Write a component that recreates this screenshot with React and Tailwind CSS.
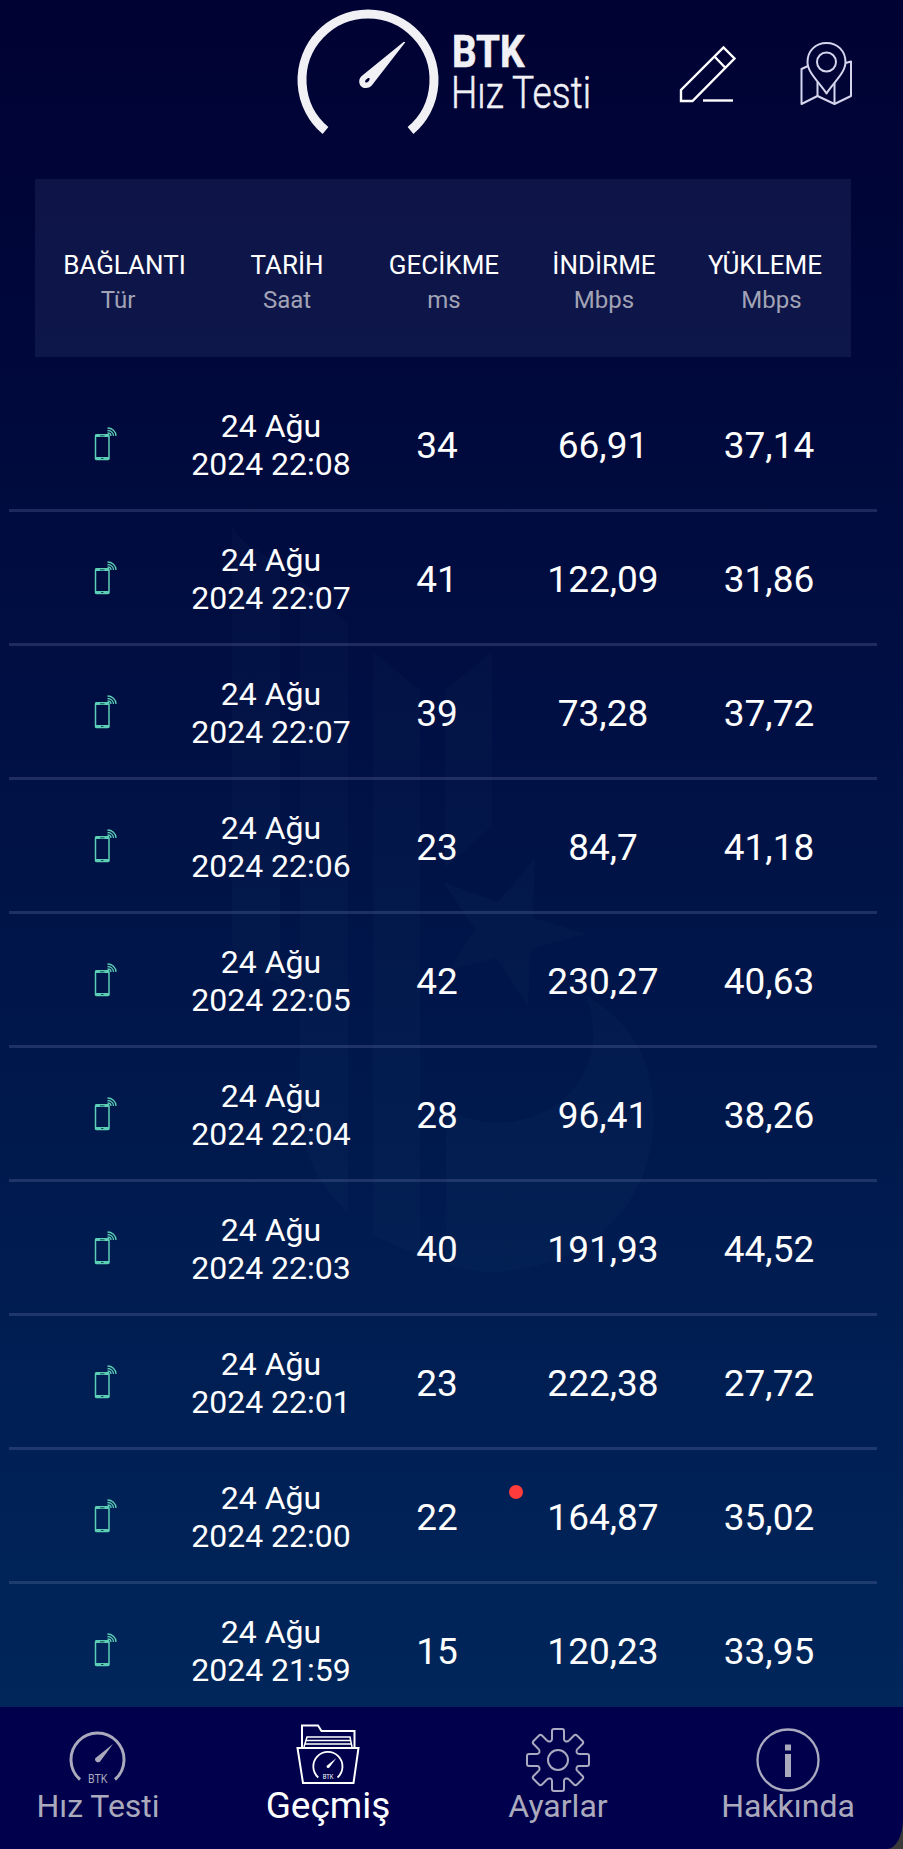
const COLUMNS = [
  { title: 'BAĞLANTI', unit: 'Tür', shift: 'pr-[13px]' },
  { title: 'TARİH', unit: 'Saat', shift: '' },
  { title: 'GECİKME', unit: 'ms', shift: '' },
  { title: 'İNDİRME', unit: 'Mbps', shift: '' },
  { title: 'YÜKLEME', unit: 'Mbps', shift: 'pl-[13px]' },
];

const RESULTS = [
  { time: '22:08', ping: '34', down: '66,91', up: '37,14' },
  { time: '22:07', ping: '41', down: '122,09', up: '31,86' },
  { time: '22:07', ping: '39', down: '73,28', up: '37,72' },
  { time: '22:06', ping: '23', down: '84,7', up: '41,18' },
  { time: '22:05', ping: '42', down: '230,27', up: '40,63' },
  { time: '22:04', ping: '28', down: '96,41', up: '38,26' },
  { time: '22:03', ping: '40', down: '191,93', up: '44,52' },
  { time: '22:01', ping: '23', down: '222,38', up: '27,72' },
  { time: '22:00', ping: '22', down: '164,87', up: '35,02', dot: true },
  { time: '21:59', ping: '15', down: '120,23', up: '33,95' },
];

function Logo() {
  return (
    <svg width="320" height="136" viewBox="290 0 320 136" className="shrink-0 overflow-visible" fill="#f0f0f5">
      <path d="M325.500 130.500A66 66 0 1 1 410.500 130.500" fill="none" stroke="#f0f0f5" strokeWidth="9" />
      <path
        fillRule="evenodd"
        d="M405.300 42.200L372.500 84.500C370 88.500 364 89.300 361 86.200C358.200 83 358.800 78.300 362 75.800L403.800 41.700ZM369.500 78.200C367.500 77.500 364.500 80.500 365.300 82.200C367.500 83.500 370.300 80 369.500 78.200Z"
      />
      <text x="452" y="67" textLength="72.500" lengthAdjust="spacingAndGlyphs" fontFamily="Roboto, sans-serif" fontWeight="700" fontSize="43.500" stroke="#f0f0f5" strokeWidth="0.600">BTK</text>
      <text x="451" y="108" textLength="140" lengthAdjust="spacingAndGlyphs" fontFamily="Roboto, sans-serif" fontWeight="300" fontSize="43.500" stroke="#f0f0f5" strokeWidth="0.500">Hız Testi</text>
    </svg>
  );
}

function EditIcon() {
  return (
    <svg width="58" height="58" viewBox="0 0 58 58" fill="none" stroke="#fff" strokeWidth="2.400">
      <path d="M2 56V45L44.500 2.500L55.500 13.500L13.500 56ZM36 12L46.500 23" />
      <path d="M24 55.500H54" />
    </svg>
  );
}

function MapIcon() {
  return (
    <svg width="52" height="64" viewBox="0 0 52 64" fill="none" stroke="#d5d5ee" strokeWidth="2" strokeLinejoin="round">
      <path d="M8 24L1.500 27V62L17.500 54L34.500 62L51 54V19.500L45.500 21" />
      <path d="M17.500 40V54M34.500 41V62" />
      <path d="M26.500 51.500C20 41 7.500 31 7.500 20C7.500 9 15.500 1 26.500 1S45.500 9 45.500 20C45.500 31 33 41 26.500 51.500Z" />
      <circle cx="26.500" cy="20" r="9.500" />
    </svg>
  );
}

function PhoneIcon() {
  return (
    <svg width="24" height="36" viewBox="0 0 24 36" fill="none" stroke="#5cceb5">
      <rect x="1.500" y="8" width="13.500" height="24.500" rx="1" strokeWidth="1.500" />
      <path d="M1.500 8.500H15M1.500 31.500H15" strokeWidth="2.800" />
      <path d="M6 8.800H10.500M7 31.500H9.500" stroke="#0b3a4b" strokeWidth="0.900" />
      <path d="M13.500 1C18 1 22 4.500 22 9M13.500 3.500C17 3.500 19.500 6 19.500 9M13.500 6C15.500 6 17 7.200 17 9" strokeWidth="1.300" />
    </svg>
  );
}

// Needle gauge shared by the tab bar icons
function Gauge({ color, width }) {
  return (
    <g stroke="none" fill={color}>
      <path d="M10.500 49A26.500 26.500 0 1 1 45.500 49" fill="none" stroke={color} strokeWidth={width} />
      <path d="M43.500 13.500L31 30.500C29 33.500 24 30.500 26 27.500Z" />
      <text x="18.500" y="52.500" textLength="19.500" lengthAdjust="spacingAndGlyphs" fontFamily="Roboto, sans-serif" fontSize="12.500">BTK</text>
    </g>
  );
}

function SpeedIcon() {
  return (
    <svg width="58" height="58" viewBox="-0.500 0.500 58 58">
      <Gauge color="#aaaabc" width={3} />
    </svg>
  );
}

function FolderIcon() {
  return (
    <svg width="64" height="62" viewBox="0 0 64 62" fill="none" stroke="#fff" strokeWidth="2">
      <path d="M6 23V1.500H22L25.500 7H58.500V23" />
      <path d="M8 23L11 13H54L56 23M10.500 16.500H54.500M9.500 20H55.500" strokeWidth="1.500" />
      <path d="M1.500 24H62.500L57.500 59H7Z" />
      <g transform="translate(16.500 26.500) scale(0.550)">
        <Gauge color="#fff" width={3.300} />
      </g>
    </svg>
  );
}

function GearIcon() {
  const tooth = 'M-11 -19.500C-9 -17.500 -6 -18.500 -6 -21V-29Q-6 -31 -4 -31H4Q6 -31 6 -29V-21C6 -18.500 9 -17.500 11 -19.500';
  return (
    <svg width="64" height="64" viewBox="-32 -32 64 64" fill="none" stroke="#aaaac0" strokeWidth="2">
      {[0, 90, 180, 270].map((a) => (
        <g key={a} transform={`rotate(${a})`}>
          <path d={tooth} />
          <path d="M11 -19.500L16 -24.500Q17.500 -26 19 -24.500L24.500 -19Q26 -17.500 24.500 -16L19.500 -11" />
        </g>
      ))}
      <circle r="10" />
    </svg>
  );
}

function InfoIcon() {
  return (
    <svg width="64" height="64" viewBox="0 0 64 64">
      <circle cx="32" cy="32" r="30.500" fill="none" stroke="#aaaac0" strokeWidth="2.300" />
      <path d="M29 16.500H35V22.500H29ZM29 26H35V49H29Z" fill="#aaaabc" />
    </svg>
  );
}

function Watermark() {
  return (
    <svg className="absolute inset-0 pointer-events-none" width="903" height="1849" viewBox="0 0 903 1849" fill="#5a8cb0" fillOpacity="0.035">
      <path d="M232 525C240 545 262 550 280 567V985C262 978 240 968 232 945Z" />
      <path d="M300 579L348 624V1212C315 1185 300 1150 300 1090Z" />
      <path d="M373 652L420 690V1257L373 1235Z" />
      <path d="M492 652L445 690V868L492 826Z" />
      <path d="M443 882L498 902L535 858L533 918L587 934L531 949L528 1006L496 958L449 970L475 929Z" />
      <path d="M585 995C630 1020 654 1060 654 1115C654 1210 580 1272 490 1272Q465 1272 446 1265V1110C520 1145 593 1100 593 1035Q593 1012 585 995Z" />
    </svg>
  );
}

const TABS = [
  { label: 'Hız Testi', Icon: SpeedIcon, box: 'w-[213px] pr-[17px]' },
  { label: 'Geçmiş', Icon: FolderIcon, box: 'w-[230px]', active: true },
  { label: 'Ayarlar', Icon: GearIcon, box: 'w-[230px]' },
  { label: 'Hakkında', Icon: InfoIcon, box: 'w-[230px]' },
];

export default function App() {
  return (
    <div className="relative flex h-[1849px] w-[903px] flex-col overflow-hidden bg-linear-to-b from-[#000233] via-[#001044] via-[40%] to-[#00295e] font-['Roboto',sans-serif] text-white">
      <Watermark />

      <header className="flex h-[179px] shrink-0 items-start pl-[290px]">
        <Logo />
        <div className="flex items-start pt-[42px] pl-[69px]">
          <div className="pt-[3px]"><EditIcon /></div>
          <div className="pl-[63px]"><MapIcon /></div>
        </div>
      </header>

      <div className="ml-[35px] grid h-[178px] w-[816px] shrink-0 grid-cols-[167px_158px_156px_164px_158px] bg-[#7484bc]/12 pt-[69px] pl-[6px] text-center leading-[35px]">
        {COLUMNS.map((c) => (
          <div key={c.title}>
            <div className="text-[26px] whitespace-nowrap">{c.title}</div>
            <div className={`text-[24px] text-[#a1a3b5] ${c.shift}`}>{c.unit}</div>
          </div>
        ))}
      </div>

      <main className="mt-[21px] flex min-h-0 flex-1 flex-col overflow-hidden pr-[26px] pl-[9px]">
        {RESULTS.map((r, i) => (
          <div
            key={i}
            className="grid h-[134px] shrink-0 grid-cols-[166px_166px_166px_166px_166px] items-center border-b-[3px] border-[#9aa0d0]/20 pt-[3px] pl-[13px] text-center text-[37px]"
          >
            <div className="flex justify-center pl-[2px]"><PhoneIcon /></div>
            <div className="text-[32px] leading-[38px]">
              24 Ağu
              <br />
              2024 {r.time}
            </div>
            <div className="pt-[2px]">{r.ping}</div>
            <div className="relative pt-[2px]">
              {r.down}
              {r.dot && <span className="absolute -top-[3px] -left-[11px] size-[14px] rounded-full bg-[#ff3b3b]" />}
            </div>
            <div className="pt-[2px]">{r.up}</div>
          </div>
        ))}
      </main>

      <div className="shrink-0 bg-[#3a3a3a]">
        <nav className="flex h-[142px] rounded-br-[16px_30px] bg-[#00004c]">
          {TABS.map(({ label, Icon, box, active }) => (
            <div key={label} className={`flex flex-col items-center pt-[21px] ${box} ${active ? 'text-[37px] text-white' : 'text-[32px] text-[#aaaabc]'}`}>
              <div className={`flex h-[63px] items-center ${active ? 'pb-[10px]' : ''}`}><Icon /></div>
              <div className="leading-[30px] whitespace-nowrap">{label}</div>
            </div>
          ))}
        </nav>
      </div>
    </div>
  );
}
